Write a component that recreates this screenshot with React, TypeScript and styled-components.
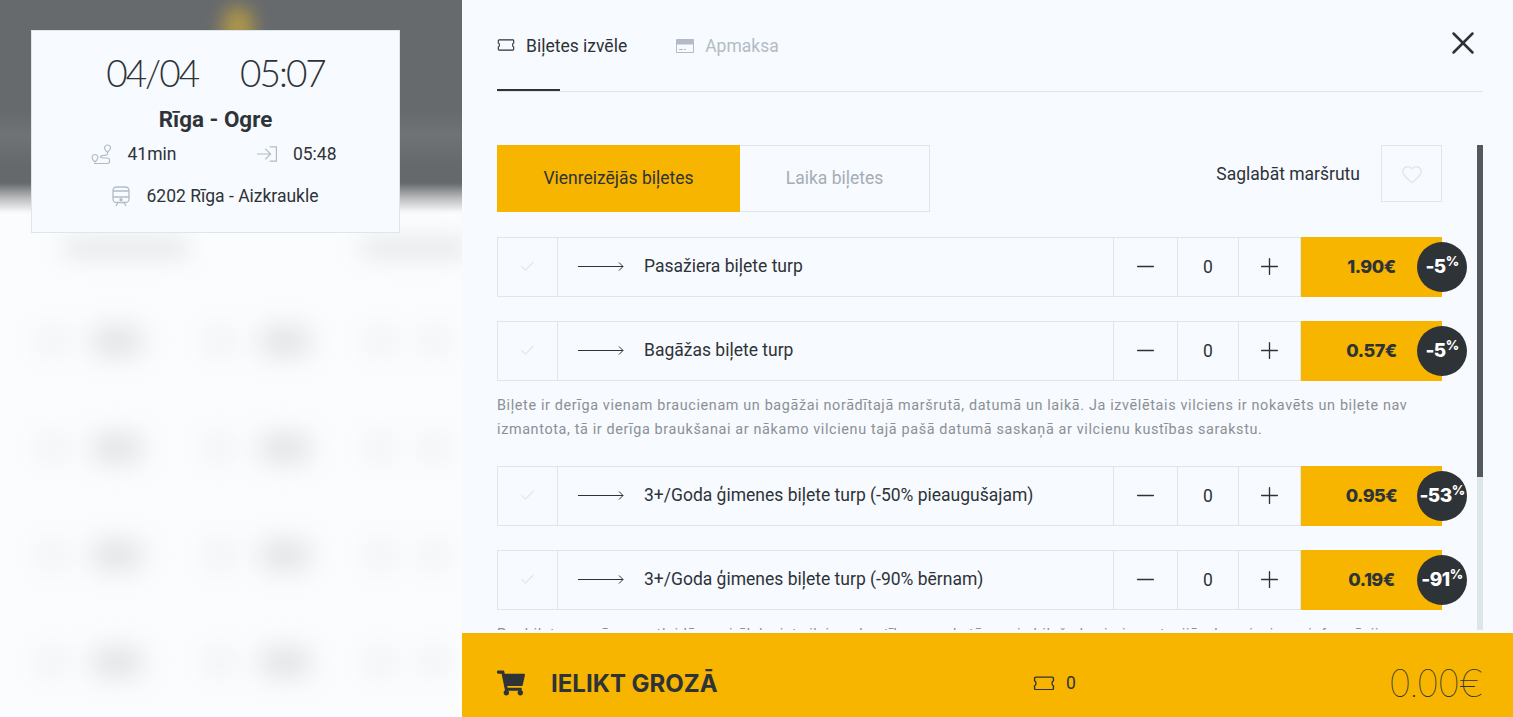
import { JSX } from 'react';
import styled, { createGlobalStyle } from 'styled-components';
import { FaShoppingCart } from 'react-icons/fa';
import { Check, Heart, Minus, Plus, X } from 'lucide-react';

const DARK = '#2e3338';
const LINE = '#dde7ea';
const YELLOW = '#f7b500';
const PANEL = '#f7fafe';
const ICON_GREY = '#b3bcc6';

type Ticket = {
  name: string;
  price: string;
  discount: string;
  note?: string;
};

const tickets: Ticket[] = [
  { name: 'Pasažiera biļete turp', price: '1.90€', discount: '-5' },
  {
    name: 'Bagāžas biļete turp',
    price: '0.57€',
    discount: '-5',
    note: 'Biļete ir derīga vienam braucienam un bagāžai norādītajā maršrutā, datumā un laikā. Ja izvēlētais vilciens ir nokavēts un biļete nav izmantota, tā ir derīga braukšanai ar nākamo vilcienu tajā pašā datumā saskaņā ar vilcienu kustības sarakstu.',
  },
  { name: '3+/Goda ģimenes biļete turp (-50% pieaugušajam)', price: '0.95€', discount: '-53' },
  {
    name: '3+/Goda ģimenes biļete turp (-90% bērnam)',
    price: '0.19€',
    discount: '-91',
    note: 'Par biļetes cenām un atlaidēm vairāk lasiet vilcienu kustības sarakstā un pie biļešu kasieriem stacijās, kur pieejama informācija.',
  },
];

const TicketIcon = ({ color, size = 18 }: { color: string; size?: number }): JSX.Element => (
  <svg width={size} height={size * 0.67} viewBox="0 0 21 14" fill="none" stroke={color} strokeWidth="1.3">
    <path d="M2.500 1h16a1 1 0 0 1 1 1v2.600c-1.800.5-1.800 4.300 0 4.800V12a1 1 0 0 1-1 1h-16a1 1 0 0 1-1-1V9.400c1.800-.5 1.800-4.300 0-4.800V2a1 1 0 0 1 1-1z" />
  </svg>
);

const CardIcon = (): JSX.Element => (
  <svg width="18" height="14" viewBox="0 0 18 14" fill={ICON_GREY}>
    <path d="M1 0h16a1 1 0 0 1 1 1v12a1 1 0 0 1-1 1H1a1 1 0 0 1-1-1V1a1 1 0 0 1 1-1zm0 5.500V13h16V5.500zM3 10h4v1H3zm5 0h2v1H8z" fillRule="evenodd" />
  </svg>
);

const RouteIcon = (): JSX.Element => (
  <svg width="21" height="21" viewBox="0 0 21 21" fill="none" stroke={ICON_GREY} strokeWidth="1.2">
    <path d="M16.500 1a3 3 0 0 1 3 3c0 1.800-3 4.500-3 4.500s-3-2.700-3-4.500a3 3 0 0 1 3-3z" />
    <path d="M4 10.500a3 3 0 0 1 3 3c0 1.800-3 4.500-3 4.500s-3-2.700-3-4.500a3 3 0 0 1 3-3z" />
    <path d="M16.500 9v1.200c0 1.600-7 .8-7 2.600 0 1 1 1.200 2 1.200h5c2.500 0 3 5.500 0 5.500H3" />
  </svg>
);

const ArrivalIcon = (): JSX.Element => (
  <svg width="21" height="16" viewBox="0 0 21 16" fill="none" stroke={ICON_GREY} strokeWidth="1.2">
    <path d="M0 8h14M8.500 2.500 14 8l-5.500 5.500M13 .6h7v14.800h-7" />
  </svg>
);

const TrainIcon = (): JSX.Element => (
  <svg width="18" height="21" viewBox="0 0 18 21" fill="none" stroke={ICON_GREY} strokeWidth="1.300">
    <rect x="1" y="1" width="16" height="15.500" rx="3.500" />
    <path d="M1 5h16M1 11h16M4 20l2-3.500M14 20l-2-3.500" />
    <circle cx="9" cy="13.700" r="1" fill={ICON_GREY} />
  </svg>
);

const LongArrow = (): JSX.Element => (
  <svg width="46" height="11" viewBox="0 0 46 11" fill="none" stroke={DARK} strokeWidth="1">
    <path d="M0 5.500h45M41 1.500l4 4-4 4" />
  </svg>
);

function TicketRow({ ticket }: { ticket: Ticket }): JSX.Element {
  return (
    <TicketBlock>
      <Row>
        <CheckCell>
          <Check size={17} color={LINE} strokeWidth={1.5} />
        </CheckCell>
        <NameCell>
          <LongArrow />
          <span>{ticket.name}</span>
        </NameCell>
        <StepCell>
          <Minus size={27} strokeWidth={1.2} />
        </StepCell>
        <CountCell>0</CountCell>
        <StepCell>
          <Plus size={27} strokeWidth={1.2} />
        </StepCell>
        <PriceCell>
          {ticket.price}
          <Badge>
            {ticket.discount}
            <sup>%</sup>
          </Badge>
        </PriceCell>
      </Row>
      {ticket.note && <Note>{ticket.note}</Note>}
    </TicketBlock>
  );
}

const blobRows = [0, 1, 2, 3];

export default function App(): JSX.Element {
  return (
    <>
      <GlobalStyle />
      <Page>
        <Backdrop>
          <Hero>
            <Glow />
          </Hero>
          <BlurHead>
            <Blob $w={128} $h={22} />
            <Blob $w={110} $h={22} />
          </BlurHead>
          <BlurList>
            {blobRows.map((row) => (
              <BlurRow key={row}>
                <Blob $w={26} $h={24} $soft />
                <Blob $w={50} $h={28} />
                <Blob $w={26} $h={24} $soft />
                <Blob $w={50} $h={28} />
                <Blob $w={26} $h={24} $soft />
                <Blob $w={26} $h={24} $soft />
              </BlurRow>
            ))}
          </BlurList>
          <TripCard>
            <DateRow>
              <span>04/04</span>
              <span>05:07</span>
            </DateRow>
            <RouteName>Rīga - Ogre</RouteName>
            <TripMeta>
              <MetaItem>
                <RouteIcon />
                41min
              </MetaItem>
              <MetaItem>
                <ArrivalIcon />
                05:48
              </MetaItem>
            </TripMeta>
            <TrainLine>
              <TrainIcon />
              6202 Rīga - Aizkraukle
            </TrainLine>
          </TripCard>
        </Backdrop>

        <Panel>
          <TopBar>
            <Tabs>
              <Tab $active>
                <TicketIcon color={DARK} />
                Biļetes izvēle
              </Tab>
              <Tab>
                <CardIcon />
                Apmaksa
              </Tab>
            </Tabs>
            <CloseButton>
              <X size={38} strokeWidth={1.6} />
            </CloseButton>
          </TopBar>

          <Scroller>
            <ScrollContent>
              <TypeBar>
                <TypeTabs>
                  <TypeTab $active $width={243}>
                    Vienreizējās biļetes
                  </TypeTab>
                  <TypeTab $width={190}>Laika biļetes</TypeTab>
                </TypeTabs>
                <SaveRoute>
                  Saglabāt maršrutu
                  <HeartBox>
                    <Heart size={22} color={LINE} strokeWidth={1.5} />
                  </HeartBox>
                </SaveRoute>
              </TypeBar>
              {tickets.map((ticket) => (
                <TicketRow key={ticket.name} ticket={ticket} />
              ))}
            </ScrollContent>
            <ScrollTrack>
              <ScrollThumb />
            </ScrollTrack>
          </Scroller>

          <Footer>
            <CartLabel>
              <FaShoppingCart size={28} color={DARK} />
              IELIKT GROZĀ
            </CartLabel>
            <CartCount>
              <TicketIcon color={DARK} size={22} />0
            </CartCount>
            <CartTotal>0.00€</CartTotal>
          </Footer>
        </Panel>
      </Page>
    </>
  );
}

const GlobalStyle = createGlobalStyle`
  html, body {
    margin: 0;
    height: 100%;
    overflow: hidden;
  }
  body {
    font-family: Roboto, "Liberation Sans", sans-serif;
    color: ${DARK};
    background: ${PANEL};
  }
`;

const Page = styled.div`
  display: flex;
  height: 717px;
  overflow: hidden;
`;

const Backdrop = styled.div`
  position: relative;
  width: 462px;
  flex-shrink: 0;
  background: #fbfcfd;
  overflow: hidden;
`;

const Hero = styled.div`
  position: relative;
  height: 215px;
  overflow: hidden;
  background: linear-gradient(
    180deg,
    #666a6d 0,
    #676a6d 110px,
    #707375 135px,
    #65696c 165px,
    #66696c 183px,
    #b9bbbd 198px,
    #f6f8f9 212px,
    #fbfcfd 215px
  );
`;

const Glow = styled.div`
  position: absolute;
  top: 6px;
  left: 222px;
  width: 32px;
  height: 44px;
  border-radius: 50%;
  background: #c9a63c;
  opacity: 0.75;
  filter: blur(9px);
`;

const BlurHead = styled.div`
  display: flex;
  justify-content: space-between;
  padding: 22px 0 0 62px;
  margin-right: -8px;
  filter: blur(11px);
  opacity: 0.7;
`;

const BlurList = styled.div`
  display: flex;
  flex-direction: column;
  gap: 79px;
  padding-top: 68px;
  filter: blur(13px);
`;

const BlurRow = styled.div`
  display: grid;
  grid-template-columns: 52px 115px 53px 108px 53px 1fr;
  padding-left: 40px;
  align-items: center;
`;

const Blob = styled.div<{ $w: number; $h: number; $soft?: boolean }>`
  width: ${({ $w }) => $w}px;
  height: ${({ $h }) => $h}px;
  border-radius: 10px;
  background: ${({ $soft }) => ($soft ? '#edf0f1' : '#dfe2e4')};
`;

const TripCard = styled.div`
  position: absolute;
  top: 30px;
  left: 31px;
  width: 369px;
  height: 203px;
  box-sizing: border-box;
  padding-top: 20px;
  background: ${PANEL};
  border: 1px solid ${LINE};
  display: flex;
  flex-direction: column;
  align-items: center;
`;

const DateRow = styled.div`
  display: flex;
  gap: 42px;
  font-family: Lato, sans-serif;
  font-weight: 300;
  font-size: 37px;
  line-height: 44px;
  letter-spacing: -2px;
`;

const RouteName = styled.div`
  margin-top: 10px;
  font-weight: 700;
  font-size: 22.4px;
  line-height: 28px;
`;

const TripMeta = styled.div`
  display: grid;
  grid-template-columns: 166px 80px;
  margin: 8px 0 0 -4px;
  font-size: 17.5px;
  line-height: 26px;
`;

const MetaItem = styled.div`
  display: flex;
  align-items: center;
  gap: 16px;
`;

const TrainLine = styled.div`
  display: flex;
  align-items: center;
  gap: 16px;
  margin-top: 16px;
  font-size: 17.5px;
  line-height: 26px;
`;

const Panel = styled.div`
  flex: 1;
  display: flex;
  flex-direction: column;
  min-width: 0;
  background: ${PANEL};
`;

const TopBar = styled.div`
  display: flex;
  justify-content: space-between;
  height: 92px;
  flex-shrink: 0;
  box-sizing: border-box;
  margin: 0 30px 0 35px;
  border-bottom: 1px solid ${LINE};
`;

const Tabs = styled.div`
  display: flex;
  gap: 49px;
`;

const Tab = styled.div<{ $active?: boolean }>`
  position: relative;
  display: flex;
  align-items: center;
  gap: 11px;
  height: 91px;
  box-sizing: border-box;
  font-size: 17.5px;
  color: ${({ $active }) => ($active ? DARK : ICON_GREY)};

  &::after {
    content: '';
    display: ${({ $active }) => ($active ? 'block' : 'none')};
    position: absolute;
    left: 0;
    bottom: 0;
    width: 63px;
    height: 2px;
    background: ${DARK};
  }
`;

const CloseButton = styled.div`
  margin: 24px 1px 0 0;
  height: 38px;
  color: ${DARK};
`;

const Scroller = styled.div`
  flex: 1;
  display: flex;
  margin: 53px 30px 3px 35px;
  min-height: 0;
  overflow: hidden;
`;

const ScrollContent = styled.div`
  width: 945px;
  flex-shrink: 0;
`;

const ScrollTrack = styled.div`
  width: 6px;
  margin-left: 35px;
  background: ${LINE};
`;

const ScrollThumb = styled.div`
  height: 332px;
  background: #54595d;
`;

const TypeBar = styled.div`
  display: flex;
  justify-content: space-between;
  align-items: flex-start;
  margin-bottom: 25px;
`;

const TypeTabs = styled.div`
  display: flex;
`;

const TypeTab = styled.div<{ $active?: boolean; $width: number }>`
  width: ${({ $width }) => $width}px;
  height: 67px;
  box-sizing: border-box;
  display: flex;
  align-items: center;
  justify-content: center;
  padding-bottom: 1px;
  font-size: 17.5px;
  background: ${({ $active }) => ($active ? YELLOW : 'transparent')};
  color: ${({ $active }) => ($active ? DARK : '#a4adb5')};
  border: ${({ $active }) => ($active ? 'none' : `1px solid ${LINE}`)};
  border-left: none;
`;

const SaveRoute = styled.div`
  display: flex;
  align-items: center;
  gap: 21px;
  font-size: 17.5px;
`;

const HeartBox = styled.div`
  width: 61px;
  height: 57px;
  box-sizing: border-box;
  border: 1px solid ${LINE};
  display: flex;
  align-items: center;
  justify-content: center;
`;

const TicketBlock = styled.div`
  margin-bottom: 24.5px;
`;

const Row = styled.div`
  display: grid;
  grid-template-columns: 61px 556px 64px 61px 62px 141px;
  height: 59.5px;
`;

const Cell = styled.div`
  box-sizing: border-box;
  display: flex;
  align-items: center;
  justify-content: center;
  border: 1px solid ${LINE};
  border-left: none;
`;

const CheckCell = styled(Cell)`
  border-left: 1px solid ${LINE};
`;

const NameCell = styled(Cell)`
  justify-content: flex-start;
  gap: 20px;
  padding-left: 20px;
  padding-bottom: 1px;
  font-size: 17.5px;
`;

const StepCell = styled(Cell)``;

const CountCell = styled(Cell)`
  font-size: 17.5px;
`;

const PriceCell = styled.div`
  position: relative;
  display: flex;
  align-items: center;
  justify-content: center;
  background: ${YELLOW};
  font-family: Inter, sans-serif;
  font-weight: 800;
  font-size: 18px;
  letter-spacing: -0.5px;
`;

const Badge = styled.div`
  position: absolute;
  right: -25px;
  top: 4.5px;
  width: 50px;
  height: 50px;
  border-radius: 50%;
  background: ${DARK};
  color: #fff;
  display: flex;
  align-items: center;
  justify-content: center;
  font-size: 19px;
  letter-spacing: -0.5px;

  sup {
    font-size: 13px;
    line-height: 0;
    position: relative;
    top: -6px;
  }
`;

const Note = styled.p`
  margin: 13px 0 0;
  font-size: 14.4px;
  line-height: 24px;
  letter-spacing: 0.63px;
  color: #8b9096;
`;

const Footer = styled.div`
  height: 84px;
  flex-shrink: 0;
  box-sizing: border-box;
  display: grid;
  grid-template-columns: 536px auto 1fr;
  align-items: center;
  padding: 16px 30px 0 35px;
  background: ${YELLOW};
`;

const CartLabel = styled.div`
  display: flex;
  align-items: center;
  gap: 26px;
  font-family: Inter, sans-serif;
  font-weight: 700;
  font-size: 24px;
`;

const CartCount = styled.div`
  display: flex;
  align-items: center;
  gap: 11px;
  font-size: 17.5px;
`;

const CartTotal = styled.div`
  justify-self: end;
  font-family: Inter, sans-serif;
  font-weight: 100;
  font-size: 38px;
  letter-spacing: -1.5px;
`;
